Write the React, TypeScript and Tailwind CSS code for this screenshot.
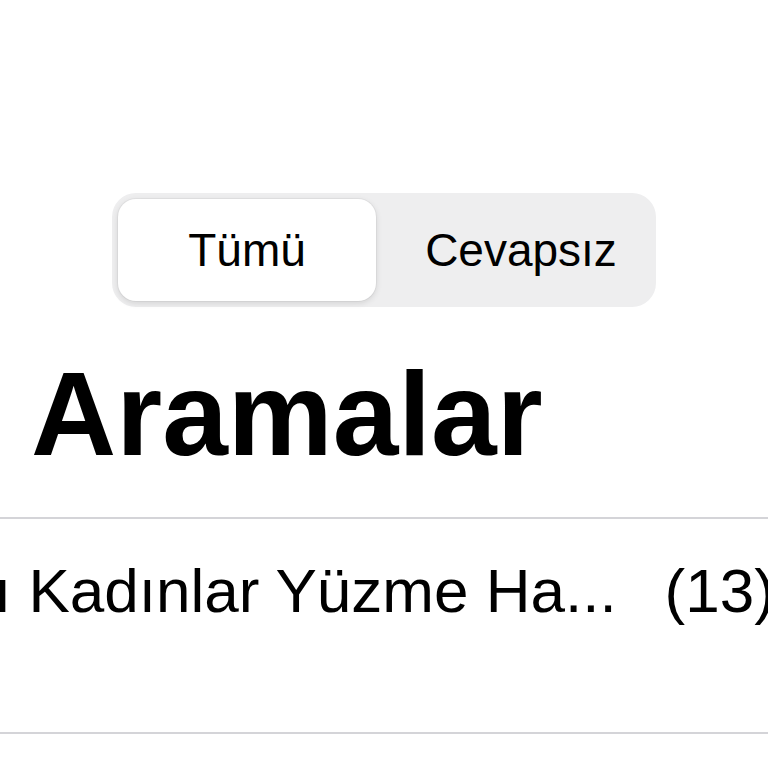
import React from "react";

export default function App() {
  return (
    <div
      className="w-[768px] h-[768px] overflow-hidden bg-white text-black flex flex-col"
      style={{ fontFamily: '"Liberation Sans", Arial, sans-serif' }}
    >
      <div className="mt-[193px] ml-[112px] w-[544px] h-[114px] rounded-[24px] bg-[#eeeeef] p-[6px] flex shrink-0">
        <div className="w-[258px] h-full rounded-[18px] bg-white shadow-[0_2px_6px_rgba(0,0,0,0.12),0_0_0_1px_rgba(0,0,0,0.04)] flex items-center justify-center text-[46px] leading-none">
          Tümü
        </div>
        <div className="flex-1 h-full flex items-center justify-center pl-[16px] text-[46px] leading-none">
          Cevapsız
        </div>
      </div>

      <h1 className="mt-[48px] ml-[31px] text-[118px] leading-none font-bold whitespace-nowrap">
        Aramalar
      </h1>

      <div className="mt-[44px] h-[2px] bg-[#d4d4d8] w-full shrink-0" />

      <div className="mt-[41px] flex whitespace-nowrap text-[62px] leading-none">
        <span className="ml-[-6px]">ı Kadınlar Yüzme Ha...</span>
        <span className="ml-[48px]">(13)</span>
      </div>

      <div className="mt-[110px] h-[2px] bg-[#d4d4d8] w-full shrink-0" />
    </div>
  );
}
